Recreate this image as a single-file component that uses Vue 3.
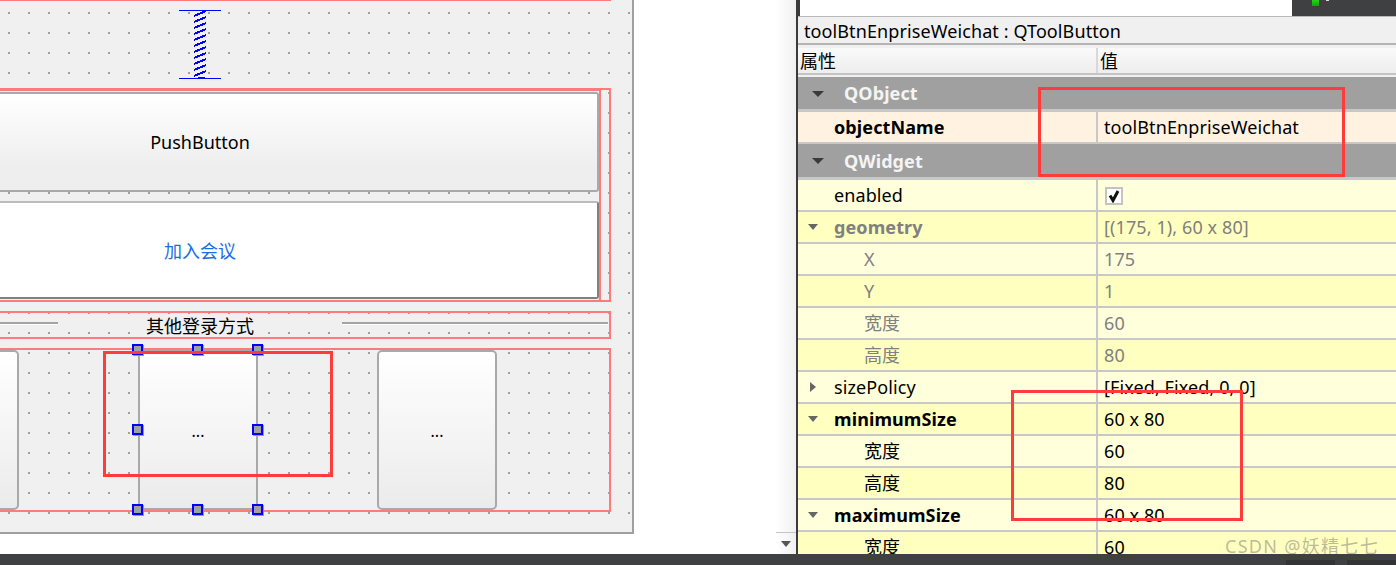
<script setup>
const rungs = Array.from({ length: 11 }, (_, i) => 6 + i * 6)

const rows = [
  { label: "enabled", check: true },
  { label: "geometry", value: "[(175, 1), 60 x 80]", arrow: "down", bold: true, muted: true },
  { label: "X", value: "175", child: true, muted: true },
  { label: "Y", value: "1", child: true, muted: true },
  { label: "宽度", value: "60", child: true, muted: true },
  { label: "高度", value: "80", child: true, muted: true },
  { label: "sizePolicy", value: "[Fixed, Fixed, 0, 0]", arrow: "right" },
  { label: "minimumSize", value: "60 x 80", arrow: "down", bold: true },
  { label: "宽度", value: "60", child: true },
  { label: "高度", value: "80", child: true },
  { label: "maximumSize", value: "60 x 80", arrow: "down", bold: true },
  { label: "宽度", value: "60", child: true },
]

const handles = ["tl", "tc", "tr", "ml", "mr", "bl", "bc", "br"]
</script>

<template>
  <div class="page">
    <div class="main">
      <div class="form">
        <div class="stack">
          <div class="top-rule"></div>
          <div class="spacer-wrap">
            <svg class="spacer" width="42" height="70" viewBox="0 0 42 70" shape-rendering="crispEdges">
              <path d="M0 .5H42M0 68.5H42" stroke="#0000ff" fill="none" />
              <path v-for="y in rungs" :key="y" :d="`M15 ${y}L27 ${y - 5}`" stroke="#0000ff" stroke-width="2" fill="none" />
              <rect x="19" y="67" width="7" height="2" fill="#0000ff" />
            </svg>
          </div>
          <div class="layout buttons-box">
            <div class="inner-box">
              <div class="push-btn">PushButton</div>
              <div class="join-btn">加入会议</div>
            </div>
          </div>
          <div class="layout divider-box">
            <div class="rule rule-left"></div>
            <div class="divider-text">其他登录方式</div>
            <div class="rule rule-right"></div>
          </div>
          <div class="layout tools-box">
            <div class="tool-btn"></div>
            <div class="tool-btn selected">
              ...
              <span v-for="h in handles" :key="h" class="handle" :class="h"></span>
            </div>
            <div class="tool-btn">...</div>
          </div>
        </div>
        <div class="mark mark-form"></div>
      </div>

      <div class="scrollbar">
        <div class="scroll-track"></div>
        <div class="scroll-down"><span class="tri tri-scroll"></span></div>
      </div>

      <div class="panel">
        <div class="filter">
          <div class="filter-input"><span class="filter-text">过滤器</span></div>
          <div class="filter-dark"><span class="green"></span><span class="tick"></span></div>
        </div>
        <div class="title">toolBtnEnpriseWeichat : QToolButton</div>
        <div class="head">
          <div class="col-name">属性</div>
          <div class="col-value">值</div>
        </div>

        <div class="section"><span class="tri tri-section"></span>QObject</div>
        <div class="row name-row">
          <div class="col-name bold indent">objectName</div>
          <div class="col-value">toolBtnEnpriseWeichat</div>
        </div>
        <div class="section tall"><span class="tri tri-section"></span>QWidget</div>

        <div v-for="(r, i) in rows" :key="i" class="row" :class="{ alt: i % 2 === 1, muted: r.muted }">
          <div class="col-name indent" :class="{ bold: r.bold, child: r.child }">
            <span v-if="r.arrow === 'down'" class="tri tri-row"></span>
            <span v-if="r.arrow === 'right'" class="tri tri-right"></span>
            {{ r.label }}
          </div>
          <div class="col-value">
            <span v-if="r.check" class="checkbox">
              <svg width="14" height="14" viewBox="0 0 14 14"><path d="M3 6.5L6 11.5L11 2" stroke="#111" stroke-width="3" fill="none" /></svg>
            </span>
            <template v-else>{{ r.value }}</template>
          </div>
        </div>

        <div class="mark mark-name"></div>
        <div class="mark mark-size"></div>
        <div class="watermark">CSDN @妖精七七_</div>
      </div>
    </div>
    <div class="footer">
      <span class="foot-block first"></span>
      <span class="foot-block second"></span>
    </div>
  </div>
</template>

<style>
html, body {
  margin: 0;
  background: #fff;
  overflow: hidden;
}
</style>

<style scoped>
.page {
  width: 1396px;
  height: 565px;
  display: flex;
  flex-direction: column;
  overflow: hidden;
  background: #fff;
  color: #000;
  font-family: "Noto Sans", "Noto Sans CJK SC", sans-serif;
  font-size: 18px;
}

.main {
  height: 554px;
  display: flex;
}

.form {
  position: relative;
  box-sizing: border-box;
  width: 634px;
  height: 534px;
  flex: none;
  margin-right: 142px;
  overflow: hidden;
  border-right: 2px solid #a0a0a0;
  border-bottom: 2px solid #a0a0a0;
  background-color: #f0f0f0;
  background-image:
    linear-gradient(to bottom, transparent 2px, #f0f0f0 2px),
    linear-gradient(to right, #a0a0a0 2px, #f0f0f0 2px);
  background-size: 20px 20px;
  background-position: 8px 12px;
}

.stack {
  width: 810px;
  margin-left: -199px;
  display: flex;
  flex-direction: column;
}

.top-rule {
  height: 1px;
  background: #ff7b7b;
}

.spacer-wrap {
  width: 798px;
  height: 87px;
  padding-top: 9px;
  box-sizing: border-box;
  display: flex;
  justify-content: center;
}

.layout {
  box-sizing: border-box;
  border: solid #ff7b7b;
  border-width: 2px 2px 2px 0;
}

.buttons-box {
  height: 214px;
  padding-right: 8px;
}

.inner-box {
  height: 210px;
  padding-top: 1px;
  box-sizing: border-box;
  border-top: 1px solid #ff7b7b;
  border-right: 2px solid #ff7b7b;
  display: flex;
  flex-direction: column;
  gap: 9px;
}

.push-btn,
.join-btn {
  display: flex;
  align-items: center;
  justify-content: center;
  box-sizing: border-box;
  border-radius: 3px;
}

.push-btn {
  height: 100px;
  background: linear-gradient(#fff, #eee 75%);
  border: 2px solid #a9a9a9;
}

.join-btn {
  height: 98px;
  background: #fff;
  color: #1a6fe0;
  border: 2px solid #bcbcbc;
  border-right-color: #808080;
  border-bottom-color: #808080;
}

.divider-box {
  height: 28px;
  margin-top: 9px;
  display: flex;
  align-items: center;
}

.rule {
  height: 3px;
  margin-top: -3px;
  box-sizing: border-box;
  border-top: 2px solid #a4a4a4;
  border-bottom: 1px solid #fff;
}

.rule-left {
  width: 257px;
}

.rule-right {
  width: 266px;
}

.divider-text {
  width: 284px;
  text-align: center;
  line-height: 24px;
  margin-top: 1px;
}

.tools-box {
  height: 164px;
  margin-top: 9px;
  padding-left: 98px;
  display: flex;
  gap: 119px;
}

.tool-btn {
  position: relative;
  width: 120px;
  height: 160px;
  box-sizing: border-box;
  padding-top: 2px;
  border: 2px solid #a9a9a9;
  border-radius: 5px;
  background: linear-gradient(#fff, #ebebeb);
  display: flex;
  align-items: center;
  justify-content: center;
  font-size: 16px;
}

.tool-btn.selected {
  border-radius: 0;
}

.handle {
  position: absolute;
  box-sizing: border-box;
  width: 11px;
  height: 11px;
  background: #a0a0a0;
  border: 2px solid #0000ff;
  box-shadow: 1px 1px 0 #999;
}

.tl, .tc, .tr { top: -8px; }
.ml, .mr { top: 72px; }
.bl, .bc, .br { top: 152px; }
.tl, .ml, .bl { left: -8px; }
.tc, .bc { left: 52px; }
.tr, .mr, .br { left: 112px; }

.mark {
  position: absolute;
  box-sizing: border-box;
  border: 3px solid #ff3b3b;
  pointer-events: none;
}

.mark-form {
  left: 103px;
  top: 351px;
  width: 230px;
  height: 126px;
}

.scrollbar {
  width: 20px;
  height: 554px;
  flex: none;
  display: flex;
  flex-direction: column;
  background: linear-gradient(to right, #fff, #f0f0f0);
}

.scroll-track {
  flex: 1;
}

.scroll-down {
  height: 21px;
  border-top: 1px solid #c4c4c4;
  display: flex;
  align-items: center;
  justify-content: center;
}

.panel {
  position: relative;
  flex: 1;
  height: 554px;
  overflow: hidden;
  border-left: 2px solid #3a3a3a;
  background: #f0f0f0;
  letter-spacing: 0.1px;
}

.filter {
  height: 17px;
  box-sizing: border-box;
  border-bottom: 1px solid #b8b8b8;
  display: flex;
}

.filter-input {
  flex: 1;
  background: #fff;
  border-left: 2px solid #3a3a3a;
  overflow: hidden;
}

.filter-text {
  display: block;
  margin: -21px 0 0 6px;
  color: #777;
  line-height: 24px;
}

.filter-dark {
  position: relative;
  width: 104px;
  background: #3f4042;
}

.green {
  position: absolute;
  left: 20px;
  top: 0;
  width: 7px;
  height: 6px;
  background: linear-gradient(#26d026, #0aa80a);
}

.tick {
  position: absolute;
  left: 34px;
  top: 0;
  width: 3px;
  height: 1px;
  background: #ddd;
}

.title {
  height: 28px;
  box-sizing: border-box;
  padding-left: 6px;
  border-bottom: 2px solid #b4b4b4;
  line-height: 29px;
}

.head {
  height: 27px;
  margin-top: 3px;
  margin-bottom: 2px;
  box-sizing: border-box;
  display: flex;
  background: linear-gradient(#fafafa, #ededed);
  border-bottom: 2px solid #c4c4c4;
  line-height: 27px;
}

.head .col-name {
  padding-left: 2px;
}

.head .col-value {
  padding-left: 2px;
}

.section {
  height: 35px;
  box-sizing: border-box;
  display: flex;
  align-items: center;
  padding-left: 46px;
  position: relative;
  background: #a0a0a0;
  border-bottom: 3px solid #c8c8c8;
  color: #f4f4f4;
  font-weight: 700;
}

.section.tall {
  height: 36px;
}

.row {
  height: 32px;
  box-sizing: border-box;
  display: flex;
  background: #ffffdc;
  border-bottom: 2px solid #c8c8c8;
  line-height: 30px;
  white-space: nowrap;
}

.row.alt {
  background: #ffffbf;
}

.row.name-row {
  background: #fff2e0;
}

.row.muted {
  color: #808080;
}

.col-name {
  position: relative;
  box-sizing: border-box;
  width: 300px;
  flex: none;
  border-right: 2px solid #c8c8c8;
}

.head .col-name {
  border-right-color: #d8d8d8;
}

.col-value {
  flex: 1;
  padding-left: 6px;
}

.indent {
  padding-left: 36px;
}

.indent.child {
  padding-left: 66px;
}

.bold {
  font-weight: 700;
}

.tri {
  position: absolute;
  width: 0;
  height: 0;
}

.tri-section {
  left: 14px;
  top: 14px;
  border-left: 6px solid transparent;
  border-right: 6px solid transparent;
  border-top: 6px solid #3a3a3a;
}

.tri-row {
  left: 10px;
  top: 12px;
  border-left: 5px solid transparent;
  border-right: 5px solid transparent;
  border-top: 6px solid #666;
}

.tri-right {
  left: 12px;
  top: 10px;
  border-top: 5px solid transparent;
  border-bottom: 5px solid transparent;
  border-left: 6px solid #666;
}

.tri-scroll {
  position: static;
  border-left: 5px solid transparent;
  border-right: 5px solid transparent;
  border-top: 6px solid #555;
}

.checkbox {
  display: flex;
  align-items: center;
  justify-content: center;
  box-sizing: border-box;
  width: 18px;
  height: 18px;
  margin: 7px 0 0 1px;
  background: #fff;
  border: 2px solid #c4c4c4;
}

.mark-name {
  left: 240px;
  top: 87px;
  width: 307px;
  height: 90px;
}

.mark-size {
  left: 213px;
  top: 390px;
  width: 232px;
  height: 131px;
}

.watermark {
  position: absolute;
  left: 427px;
  top: 534px;
  color: rgba(120, 120, 120, 0.5);
  line-height: 24px;
  white-space: nowrap;
  font-size: 18px;
  letter-spacing: 1.3px;
}

.footer {
  height: 11px;
  background: #3f4042;
  position: relative;
  display: flex;
  justify-content: flex-end;
  align-items: flex-end;
}

.foot-block {
  height: 5px;
  background: #333436;
}

.foot-block.first {
  width: 49px;
  margin-right: 12px;
}

.foot-block.second {
  width: 49px;
}
</style>
